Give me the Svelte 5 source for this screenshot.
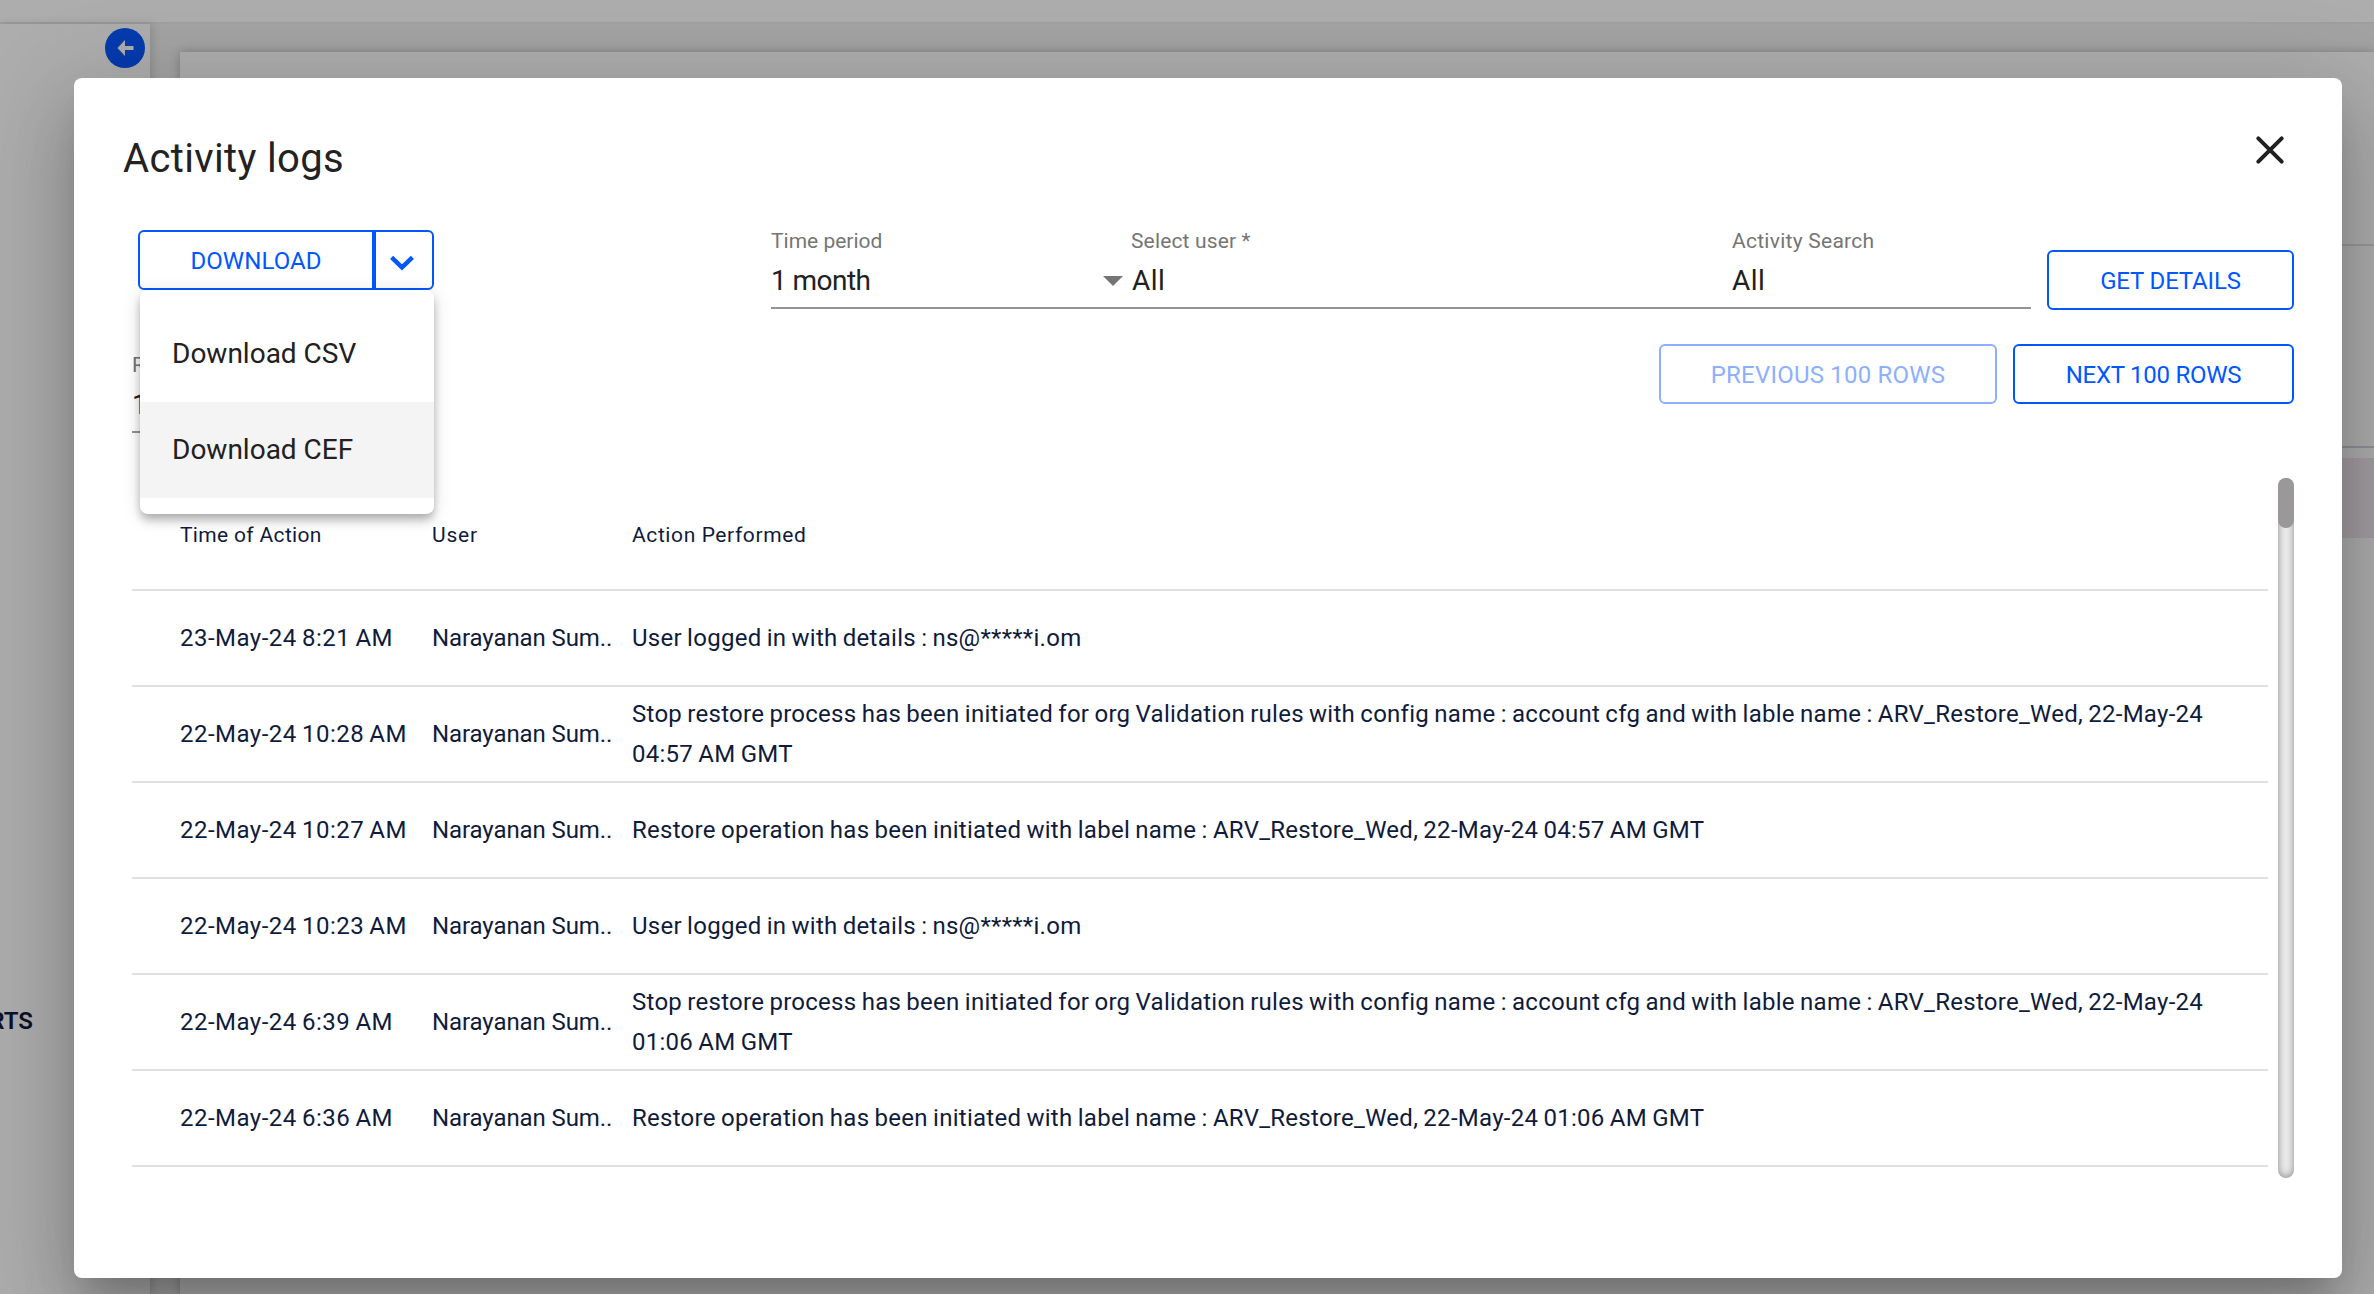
<script>
  const logs = [
    { time: '23-May-24 8:21 AM', action: 'User logged in with details : ns@*****i.om' },
    {
      time: '22-May-24 10:28 AM',
      action:
        'Stop restore process has been initiated for org Validation rules with config name : account cfg and with lable name : ARV_Restore_Wed, 22-May-24 04:57 AM GMT',
    },
    {
      time: '22-May-24 10:27 AM',
      action: 'Restore operation has been initiated with label name : ARV_Restore_Wed, 22-May-24 04:57 AM GMT',
    },
    { time: '22-May-24 10:23 AM', action: 'User logged in with details : ns@*****i.om' },
    {
      time: '22-May-24 6:39 AM',
      action:
        'Stop restore process has been initiated for org Validation rules with config name : account cfg and with lable name : ARV_Restore_Wed, 22-May-24 01:06 AM GMT',
    },
    {
      time: '22-May-24 6:36 AM',
      action: 'Restore operation has been initiated with label name : ARV_Restore_Wed, 22-May-24 01:06 AM GMT',
    },
  ];
  const menu = ['Download CSV', 'Download CEF'];
  const active = 'Download CEF';
</script>

<div class="page">
  <div class="topbar"></div>
  <div class="body">
    <aside class="sidebar">
      <div class="collapse">
        <svg width="40" height="40" viewBox="0 0 40 40">
          <circle cx="20" cy="20" r="20" />
          <path d="M12.5 20 L20 12 V18 H28.5 V22 H20 V28 Z" />
        </svg>
      </div>
      <div class="nav-item">RTS</div>
    </aside>
    <main class="content">
      <div class="strip first"></div>
      <div class="strip second"></div>
      <div class="tinted"></div>
    </main>
  </div>

  <section class="modal">
    <header class="head">
      <h1>Activity logs</h1>
      <svg class="close" width="28" height="28" viewBox="0 0 28 28">
        <path d="M2.3 2.3 L25.7 25.7 M25.7 2.3 L2.3 25.7" />
      </svg>
    </header>

    <div class="toolbar">
      <div class="split">
        <button class="btn main-btn">DOWNLOAD</button>
        <button class="btn arrow-btn" aria-label="More">
          <svg width="24" height="16" viewBox="0 0 24 16"><path d="M1.6 2.4 L12 12.4 L22.4 2.4" /></svg>
        </button>
        <div class="menu">
          {#each menu as item}
            <div class="menu-item" class:active={item === active}>{item}</div>
          {/each}
        </div>
      </div>
      <div class="fields">
        <div class="field period">
          <label>Time period</label>
          <div class="value"><span>1 month</span><i class="caret"></i></div>
        </div>
        <div class="field user-field">
          <label>Select user *</label>
          <div class="value all">All</div>
        </div>
        <div class="field search">
          <label>Activity Search</label>
          <div class="value all">All</div>
        </div>
      </div>
      <button class="btn details">GET DETAILS</button>
    </div>

    <div class="pager">
      <div class="field rows">
        <label>Rows</label>
        <div class="value">100</div>
      </div>
      <button class="btn prev">PREVIOUS 100 ROWS</button>
      <button class="btn next">NEXT 100 ROWS</button>
    </div>

    <div class="scroller">
      <div class="table">
        <div class="row thead">
          <div class="h-time">Time of Action</div>
          <div class="h-user">User</div>
          <div class="h-action">Action Performed</div>
        </div>
        {#each logs as log}
          <div class="row">
            <div class="time">{log.time}</div>
            <div class="user">Narayanan Sum..</div>
            <div class="action">{log.action}</div>
          </div>
        {/each}
      </div>
      <div class="track"><div class="thumb"></div></div>
    </div>
  </section>
</div>

<style>
  :global(body) {
    background: #adadad;
  }
  .page {
    position: relative;
    width: 2374px;
    height: 1294px;
    overflow: hidden;
    box-sizing: border-box;
    display: flex;
    flex-direction: column;
    background: #a3a3a3;
    font-family: Roboto, 'Liberation Sans', sans-serif;
    color: #212121;
  }
  .page :global(*) {
    box-sizing: border-box;
  }
  .topbar {
    flex: none;
    height: 24px;
    background: #adadad;
    border-bottom: 2px solid #9f9f9f;
  }
  .body {
    flex: 1;
    display: flex;
    gap: 30px;
  }
  .sidebar {
    width: 150px;
    background: #adadad;
    box-shadow: 2px 0 8px rgba(0, 0, 0, 0.14);
    display: flex;
    flex-direction: column;
  }
  .collapse {
    padding: 4px 5px 0 0;
    display: flex;
    justify-content: flex-end;
  }
  .collapse circle {
    fill: #053bad;
  }
  .collapse path {
    fill: #adadad;
  }
  .nav-item {
    width: 33px;
    margin-top: 937px;
    display: flex;
    justify-content: flex-end;
    font-size: 24px;
    line-height: 32px;
    font-weight: 600;
    color: #0a1329;
  }
  .content {
    flex: 1;
    margin-top: 28px;
    background: #adadad;
    box-shadow: 0 0 10px rgba(0, 0, 0, 0.24);
    display: flex;
    flex-direction: column;
  }
  .strip {
    height: 194px;
    border-bottom: 2px solid #999;
  }
  .strip.second {
    height: 202px;
    border-bottom-color: #8f8f99;
  }
  .tinted {
    margin-top: 10px;
    height: 80px;
    background: #a39da2;
  }

  .modal {
    position: absolute;
    left: 74px;
    top: 78px;
    width: 2268px;
    height: 1200px;
    padding: 56px 48px 0 49px;
    border-radius: 8px;
    background: #fff;
    box-shadow:
      0 22px 30px -14px rgba(0, 0, 0, 0.2),
      0 48px 76px 6px rgba(0, 0, 0, 0.14),
      0 18px 92px 16px rgba(0, 0, 0, 0.12);
  }
  .head {
    height: 96px;
    display: flex;
    justify-content: space-between;
    padding-right: 10px;
  }
  h1 {
    margin: 0;
    font-size: 40px;
    line-height: 50px;
    font-weight: 400;
    letter-spacing: 0.35px;
    color: #222;
  }
  .close {
    margin-top: 2px;
    overflow: visible;
  }
  .close path {
    stroke: #212121;
    stroke-width: 4;
    stroke-linecap: round;
    fill: none;
  }

  .btn {
    flex: none;
    height: 60px;
    padding: 2px 0 0;
    border: 2px solid #0057ff;
    border-radius: 6px;
    background: #fff;
    color: #0057ff;
    font: 400 24px/32px Roboto, 'Liberation Sans', sans-serif;
    text-align: center;
    white-space: nowrap;
  }
  .toolbar {
    height: 80px;
    display: flex;
    padding-left: 15px;
  }
  .split {
    position: relative;
    z-index: 2;
    flex: none;
    width: 296px;
    height: 60px;
    display: flex;
  }
  .main-btn {
    width: 236px;
    border-radius: 6px 0 0 6px;
    letter-spacing: 0.09px;
  }
  .arrow-btn {
    width: 60px;
    border-radius: 0 6px 6px 0;
    display: flex;
    align-items: center;
    justify-content: center;
    padding: 5px 4px 0 0;
  }
  .arrow-btn path {
    fill: none;
    stroke: #0057ff;
    stroke-width: 4.4;
  }
  .menu {
    position: absolute;
    left: 2px;
    top: 60px;
    width: 294px;
    height: 224px;
    padding: 16px 0;
    border-radius: 8px;
    background: #fff;
    box-shadow:
      0 4px 8px -2px rgba(0, 0, 0, 0.2),
      0 8px 10px 0 rgba(0, 0, 0, 0.14),
      0 2px 20px 0 rgba(0, 0, 0, 0.12);
  }
  .menu-item {
    height: 96px;
    padding-left: 32px;
    font-size: 28px;
    line-height: 96px;
  }
  .menu-item.active {
    background: #f4f4f4;
  }
  .fields {
    width: 1260px;
    height: 79px;
    margin: 0 16px 0 337px;
    display: grid;
    grid-template-columns: 360px 601px 1fr;
  }
  .field {
    height: 79px;
    border-bottom: 2px solid #949494;
    display: flex;
    flex-direction: column;
    gap: 10px;
  }
  .field label {
    font-size: 21px;
    line-height: 22px;
    color: #757575;
  }
  .search label {
    letter-spacing: 0.26px;
  }
  .user-field label {
    letter-spacing: 0.15px;
  }
  .user-field .value {
    padding-left: 1px;
  }
  .value {
    display: flex;
    align-items: center;
    justify-content: space-between;
    font-size: 28px;
    line-height: 38px;
    letter-spacing: -0.55px;
  }
  .value.all {
    letter-spacing: 0.46px;
  }
  .period .value {
    padding-right: 8px;
  }
  .caret {
    border: 10px solid transparent;
    border-top-color: #757575;
    border-bottom: 0;
  }
  .details {
    width: 247px;
    margin-top: 20px;
    letter-spacing: -0.16px;
  }

  .pager {
    margin-top: 34px;
    padding-left: 9px;
    height: 134px;
    display: flex;
    align-items: flex-start;
    gap: 16px;
  }
  .rows {
    width: 240px;
    margin: 10px auto 0 0;
  }
  .prev {
    width: 338px;
    color: #8cafff;
    border-color: #8cafff;
    letter-spacing: 0.21px;
  }
  .next {
    width: 281px;
    letter-spacing: -0.26px;
  }

  .scroller {
    height: 700px;
    padding-left: 9px;
    display: flex;
    gap: 10px;
  }
  .table {
    width: 2136px;
  }
  .row {
    height: 96px;
    border-bottom: 2px solid #e0e0e0;
    padding-left: 48px;
    display: grid;
    grid-template-columns: 252px 200px 1590px;
    align-items: center;
    font-size: 24px;
    line-height: 40px;
    color: #101b3b;
  }
  .row.thead {
    height: 113px;
    padding-top: 2px;
    font-size: 21px;
  }
  .h-time {
    letter-spacing: 0.33px;
  }
  .h-user {
    letter-spacing: 0.8px;
  }
  .h-action {
    letter-spacing: 0.6px;
  }
  .time {
    letter-spacing: 0.48px;
    word-spacing: -1.2px;
  }
  .user {
    letter-spacing: -0.09px;
  }
  .action {
    letter-spacing: 0.27px;
    word-spacing: -1px;
  }
  .track {
    width: 16px;
    height: 700px;
    border-radius: 8px;
    background: #f0f0f0;
    box-shadow: inset 0 0 10px rgba(0, 0, 0, 0.45);
  }
  .thumb {
    height: 50px;
    border-radius: 8px;
    background: #9a9898;
  }
</style>
